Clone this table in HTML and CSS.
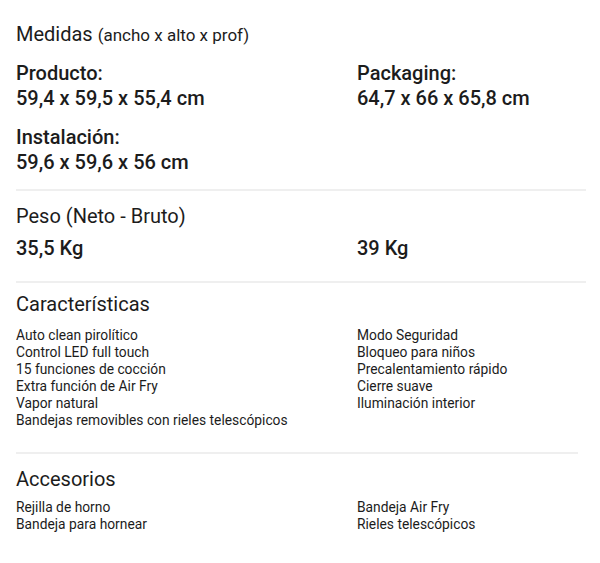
FILE: index.html
```html
<!DOCTYPE html>
<html lang="es">
<head>
<meta charset="utf-8">
<link rel="stylesheet" href="styles.css">
</head>
<body>
<div class="specs">
  <section class="block block-dims">
    <h2 class="title">Medidas <span class="title-sub">(ancho x alto x prof)</span></h2>
    <div class="dims">
      <div class="dim">
        <div class="dim-label">Producto:</div>
        <div class="dim-value">59,4 x 59,5 x 55,4 cm</div>
      </div>
      <div class="dim">
        <div class="dim-label">Packaging:</div>
        <div class="dim-value">64,7 x 66 x 65,8 cm</div>
      </div>
      <div class="dim">
        <div class="dim-label">Instalación:</div>
        <div class="dim-value">59,6 x 59,6 x 56 cm</div>
      </div>
    </div>
  </section>
  <hr class="divider">
  <section class="block block-weight">
    <h2 class="title">Peso (Neto - Bruto)</h2>
    <div class="weights">
      <div class="weight">35,5 Kg</div>
      <div class="weight">39 Kg</div>
    </div>
  </section>
  <hr class="divider">
  <section class="block block-features">
    <h2 class="title">Características</h2>
    <div class="lists">
      <ul class="list">
        <li>Auto clean pirolítico</li>
        <li>Control LED full touch</li>
        <li>15 funciones de cocción</li>
        <li>Extra función de Air Fry</li>
        <li>Vapor natural</li>
        <li>Bandejas removibles con rieles telescópicos</li>
      </ul>
      <ul class="list">
        <li>Modo Seguridad</li>
        <li>Bloqueo para niños</li>
        <li>Precalentamiento rápido</li>
        <li>Cierre suave</li>
        <li>Iluminación interior</li>
      </ul>
    </div>
  </section>
  <hr class="divider divider-short">
  <section class="block block-acc">
    <h2 class="title">Accesorios</h2>
    <div class="lists">
      <ul class="list">
        <li>Rejilla de horno</li>
        <li>Bandeja para hornear</li>
      </ul>
      <ul class="list">
        <li>Bandeja Air Fry</li>
        <li>Rieles telescópicos</li>
      </ul>
    </div>
  </section>
</div>
</body>
</html>
```

FILE: styles.css
```css
* { box-sizing: border-box; }
body {
  margin: 0;
  background: #fff;
  color: #1c1c1c;
  font-family: Roboto, "Liberation Sans", sans-serif;
}
.specs {
  width: 600px;
  padding: 22px 14px 0 16px;
}
.title {
  margin: 0;
  font-size: 20px;
  font-weight: 400;
  line-height: 24px;
}
.title-sub {
  font-size: 17px;
}
.dims {
  margin-top: 14px;
  display: grid;
  grid-template-columns: 341px 1fr;
  row-gap: 14px;
}
.dim-label, .dim-value {
  font-size: 20px;
  font-weight: 500;
  line-height: 25px;
}
.divider {
  margin: 14px 0 0 0;
  border: 0;
  height: 2px;
  background: #efefef;
}
.divider-short {
  margin-right: 8px;
}
.block-weight { margin-top: 13px; }
.weights {
  margin-top: 8px;
  display: grid;
  grid-template-columns: 341px 1fr;
}
.weight {
  font-size: 20px;
  font-weight: 500;
  line-height: 24px;
}
.block-weight + .divider { margin-top: 21px; }
.block-features { margin-top: 9px; }
.lists {
  margin-top: 11px;
  display: grid;
  grid-template-columns: 341px 1fr;
}
.list {
  margin: 0;
  padding: 0;
  list-style: none;
  font-size: 13.8px;
  line-height: 17px;
}
.block-features + .divider { margin-top: 23px; }
.block-acc { margin-top: 13px; }
.block-acc .lists { margin-top: 8px; }
```
